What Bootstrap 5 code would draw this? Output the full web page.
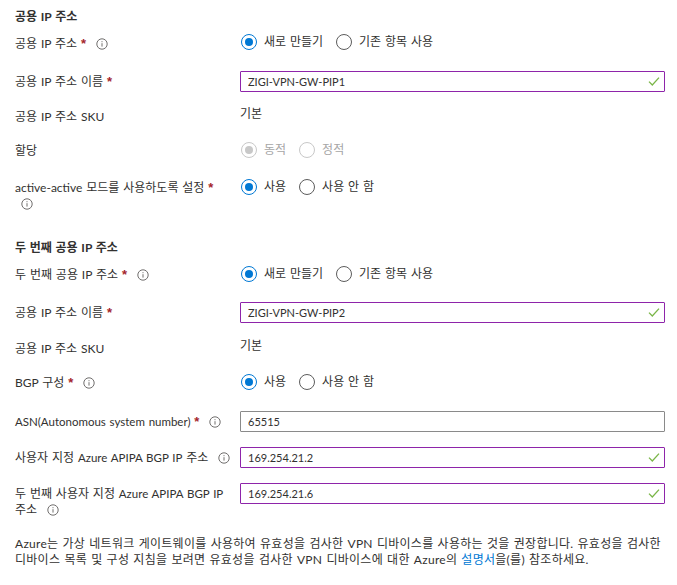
<!DOCTYPE html>
<html lang="ko">
<head>
  <meta charset="UTF-8">
  <meta name="viewport" content="width=device-width, initial-scale=1">
  <title>공용 IP 주소</title>
  <link href="https://cdn.jsdelivr.net/npm/bootstrap@5.3.0/dist/css/bootstrap.min.css" rel="stylesheet">
  <style>
    body { background: #fff; color: #323130; font-family: Lato, "Noto Sans CJK KR", sans-serif; font-size: 12px; line-height: 16px; word-spacing: .8px; }
    .page-wrap { padding: 9px 12px 0 15px; }
    .sec-title { font-size: 12px; font-weight: 700; line-height: 16px; margin: 0; }
    .form-line { min-height: 21px; }
    .line-label { width: 225px; flex: none; padding-top: 3px; }
    .line-label.first-label { padding-top: 4px; }
    .line-value { flex: 1; min-width: 0; }
    .latin-txt { font-size: 11.5px; }
    .req { color: #a4262c; font-family: "Liberation Sans", sans-serif; font-weight: 700; font-size: 13px; }
    .info-ico { width: 12px; height: 12px; margin-left: 6px; vertical-align: -2px; }
    .sp13 { margin-bottom: 13px; } .sp14 { margin-bottom: 14px; } .sp15 { margin-bottom: 15px; }
    .sp16 { margin-bottom: 16px; } .sp17 { margin-bottom: 17px; } .sp18 { margin-bottom: 18px; }
    .top7 { margin-top: 7px; } .top8 { margin-top: 8px; } .top28 { margin-top: 28px; }
    .radio-row { display: flex; align-items: center; gap: 7px; height: 20px; }
    .radio-row .form-check-input { width: 16px; height: 16px; margin: 0 0 0 1px; flex: none; border: 1.5px solid #5c5c5c; box-shadow: none; }
    .radio-row .form-check-input:checked { background-color: #fff; border-color: #0078d4; background-image: url("data:image/svg+xml,%3csvg xmlns='http://www.w3.org/2000/svg' viewBox='-8 -8 16 16'%3e%3ccircle r='4.6' fill='%230078d4'/%3e%3c/svg%3e"); background-size: 100%; }
    .radio-row .form-check-input:disabled { opacity: 1; border-color: #c8c8c8; }
    .radio-row .form-check-input:disabled:checked { background-image: url("data:image/svg+xml,%3csvg xmlns='http://www.w3.org/2000/svg' viewBox='-8 -8 16 16'%3e%3ccircle r='4.6' fill='%23c8c8c8'/%3e%3c/svg%3e"); }
    .radio-row label { margin: 0 5px 0 0; }
    .radio-row .form-check-input:disabled + label { color: #a6a6a6; opacity: 1; }
    .field-box { position: relative; }
    .field-box .form-control { height: 21px; min-height: 21px; padding: 0 26px 0 7px; font-size: 11px; line-height: 17px; color: #323130; border: 1px solid #8a8a8a; border-radius: 1px; box-shadow: none; font-family: inherit; }
    .field-box .form-control.edited { border-color: #8e24aa; }
    .ok-ico { position: absolute; right: 5px; top: 5px; width: 12px; height: 11px; }
    .note-text { margin: 18px 0 0; line-height: 16px; letter-spacing: .27px; word-break: keep-all; }
    .note-text a { color: #0078d4; text-decoration: none; }
  </style>
</head>
<body>
  <svg width="0" height="0" class="d-block">
    <symbol id="i-info" viewBox="0 0 12 12">
      <circle cx="6" cy="6" r="5.2" fill="none" stroke="#605e5c" stroke-width=".9"/>
      <path d="M6 5.2v3.4M6 3.2v1" stroke="#605e5c" stroke-width=".9" fill="none"/>
    </symbol>
    <symbol id="i-ok" viewBox="0 0 12 11">
      <path d="M1 5.6 4.3 9 11 1.6" stroke="#7ab648" stroke-width="1.3" fill="none"/>
    </symbol>
  </svg>

  <div class="page-wrap">
    <h2 class="sec-title">공용 IP 주소</h2>

    <div class="form-line d-flex top7 sp18">
      <div class="line-label first-label">공용 IP 주소 <span class="req">*</span> <svg class="info-ico"><use href="#i-info"/></svg></div>
      <div class="line-value radio-row">
        <input class="form-check-input" type="radio" name="pip1" id="pip1new" checked><label for="pip1new">새로 만들기</label>
        <input class="form-check-input" type="radio" name="pip1" id="pip1old"><label for="pip1old">기존 항목 사용</label>
      </div>
    </div>

    <div class="form-line d-flex sp14">
      <div class="line-label">공용 IP 주소 이름 <span class="req">*</span></div>
      <div class="line-value field-box">
        <input class="form-control edited" type="text" value="ZIGI-VPN-GW-PIP1">
        <svg class="ok-ico"><use href="#i-ok"/></svg>
      </div>
    </div>

    <div class="form-line d-flex sp13">
      <div class="line-label">공용 IP 주소 SKU</div>
      <div class="line-value">기본</div>
    </div>

    <div class="form-line d-flex sp16">
      <div class="line-label">할당</div>
      <div class="line-value radio-row">
        <input class="form-check-input" type="radio" name="alloc" id="allocdyn" checked disabled><label for="allocdyn">동적</label>
        <input class="form-check-input" type="radio" name="alloc" id="allocsta" disabled><label for="allocsta">정적</label>
      </div>
    </div>

    <div class="form-line d-flex">
      <div class="line-label">active-active 모드를 사용하도록 설정 <span class="req">*</span><br><svg class="info-ico"><use href="#i-info"/></svg></div>
      <div class="line-value radio-row">
        <input class="form-check-input" type="radio" name="aa" id="aaon" checked><label for="aaon">사용</label>
        <input class="form-check-input" type="radio" name="aa" id="aaoff"><label for="aaoff">사용 안 함</label>
      </div>
    </div>

    <h2 class="sec-title top28">두 번째 공용 IP 주소</h2>

    <div class="form-line d-flex top8 sp17">
      <div class="line-label">두 번째 공용 IP 주소 <span class="req">*</span> <svg class="info-ico"><use href="#i-info"/></svg></div>
      <div class="line-value radio-row">
        <input class="form-check-input" type="radio" name="pip2" id="pip2new" checked><label for="pip2new">새로 만들기</label>
        <input class="form-check-input" type="radio" name="pip2" id="pip2old"><label for="pip2old">기존 항목 사용</label>
      </div>
    </div>

    <div class="form-line d-flex sp15">
      <div class="line-label">공용 IP 주소 이름 <span class="req">*</span></div>
      <div class="line-value field-box">
        <input class="form-control edited" type="text" value="ZIGI-VPN-GW-PIP2">
        <svg class="ok-ico"><use href="#i-ok"/></svg>
      </div>
    </div>

    <div class="form-line d-flex sp13">
      <div class="line-label">공용 IP 주소 SKU</div>
      <div class="line-value">기본</div>
    </div>

    <div class="form-line d-flex sp18">
      <div class="line-label">BGP 구성 <span class="req">*</span> <svg class="info-ico"><use href="#i-info"/></svg></div>
      <div class="line-value radio-row">
        <input class="form-check-input" type="radio" name="bgp" id="bgpon" checked><label for="bgpon">사용</label>
        <input class="form-check-input" type="radio" name="bgp" id="bgpoff"><label for="bgpoff">사용 안 함</label>
      </div>
    </div>

    <div class="form-line d-flex sp15">
      <div class="line-label"><span class="latin-txt">ASN(Autonomous system number)</span> <span class="req">*</span> <svg class="info-ico"><use href="#i-info"/></svg></div>
      <div class="line-value field-box">
        <input class="form-control" type="text" value="65515">
      </div>
    </div>

    <div class="form-line d-flex sp15">
      <div class="line-label">사용자 지정 <span class="latin-txt">Azure APIPA BGP IP</span> 주소 <svg class="info-ico"><use href="#i-info"/></svg></div>
      <div class="line-value field-box">
        <input class="form-control edited" type="text" value="169.254.21.2">
        <svg class="ok-ico"><use href="#i-ok"/></svg>
      </div>
    </div>

    <div class="form-line d-flex">
      <div class="line-label">두 번째 사용자 지정 <span class="latin-txt">Azure APIPA BGP IP</span><br>주소 <svg class="info-ico"><use href="#i-info"/></svg></div>
      <div class="line-value field-box">
        <input class="form-control edited" type="text" value="169.254.21.6">
        <svg class="ok-ico"><use href="#i-ok"/></svg>
      </div>
    </div>

    <p class="note-text">Azure는 가상 네트워크 게이트웨이를 사용하여 유효성을 검사한 VPN 디바이스를 사용하는 것을 권장합니다. 유효성을 검사한 디바이스 목록 및 구성 지침을 보려면 유효성을 검사한 VPN 디바이스에 대한 Azure의 <a href="#">설명서</a>을(를) 참조하세요.</p>
  </div>

  <script src="https://cdn.jsdelivr.net/npm/bootstrap@5.3.0/dist/js/bootstrap.bundle.min.js"></script>
</body>
</html>
